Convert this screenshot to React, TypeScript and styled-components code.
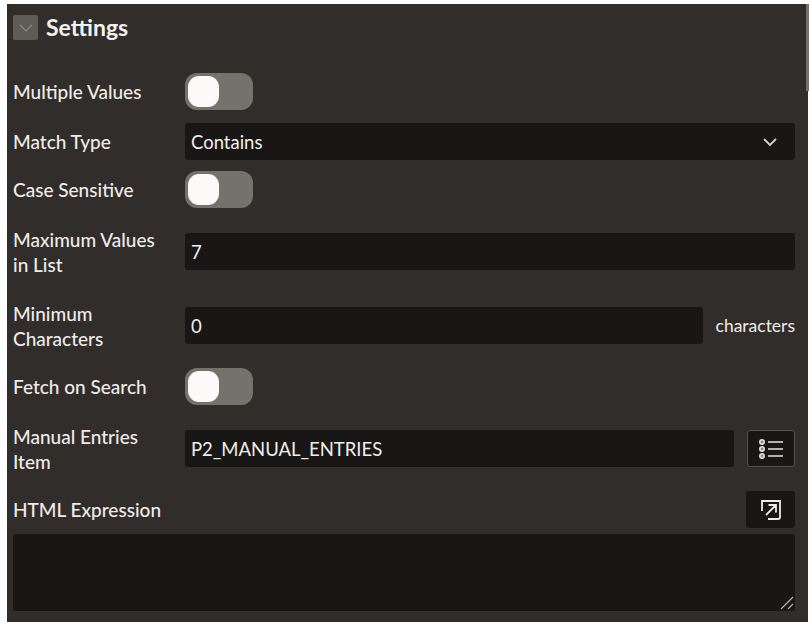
import React from "react";
import styled, { createGlobalStyle } from "styled-components";

const Global = createGlobalStyle`
  html, body { margin: 0; padding: 0; background: #fdfdfd; }
  body { font-family: "Lato", "Open Sans", sans-serif; }
`;

const Page = styled.div`
  width: 810px;
  height: 625px;
  padding: 4px 2px 3px 7px;
  box-sizing: border-box;
  display: flex;
  overflow: hidden;
`;

const Panel = styled.section`
  flex: 1;
  background: #312d2a;
  padding: 11px 13px 0 6px;
  box-sizing: border-box;
  display: flex;
  flex-direction: column;
  color: #f1efed;
`;

const Scrollbar = styled.div`
  position: absolute;
  left: 806px;
  top: 4px;
  width: 3px;
  height: 87px;
  background: #75716e;
`;

const Header = styled.header`
  display: flex;
  align-items: center;
  gap: 8px;
  height: 25px;
  margin-bottom: 33px;
`;

const Collapse = styled.button`
  width: 25px;
  height: 25px;
  padding: 0;
  border: 0;
  border-radius: 2px;
  background: #5f5b57;
  display: flex;
  align-items: center;
  justify-content: center;
`;

const Title = styled.h2`
  margin: 0;
  font-size: 23px;
  font-weight: 700;
  line-height: 25px;
  color: #f4f2f0;
`;

const Row = styled.div<{ $top: number }>`
  display: flex;
  align-items: center;
  margin-top: ${(p) => p.$top}px;
`;

const Label = styled.label<{ $double?: boolean }>`
  width: 172px;
  flex: none;
  font-size: 19px;
  font-weight: 500;
  line-height: 25px;
  color: #eeecea;
  height: ${(p) => (p.$double ? "49px" : "auto")};
`;

const Grow = styled.div`
  flex: 1;
`;

const Field = styled.div`
  flex: 1;
  height: 37px;
  background: #181716;
  border-radius: 3px;
  padding: 0 6px;
  box-sizing: border-box;
  display: flex;
  align-items: center;
  justify-content: space-between;
  font-size: 18.5px;
  color: #f1efed;
`;

const Caret = styled.span`
  display: flex;
  margin-right: 11px;
`;

const Toggle = styled.div`
  width: 68px;
  height: 37px;
  border-radius: 12px;
  background: #75716c;
  padding: 3px;
  box-sizing: border-box;
`;

const Knob = styled.div`
  width: 31px;
  height: 31px;
  border-radius: 11px;
  background: #fbfaf9;
`;

const Suffix = styled.span`
  margin-left: 13px;
  font-size: 17.5px;
  color: #eeecea;
`;

const IconButton = styled.button<{ $outlined?: boolean }>`
  flex: none;
  margin-left: 13px;
  width: ${(p) => (p.$outlined ? 48 : 49)}px;
  height: 37px;
  padding: 0;
  border-radius: 3px;
  background: #181716;
  border: ${(p) => (p.$outlined ? "1.5px solid #55514e" : "0")};
  box-sizing: border-box;
  display: flex;
  align-items: center;
  justify-content: center;
`;

const TextArea = styled.div`
  position: relative;
  height: 77px;
  margin-top: 6px;
  background: #181716;
  border-radius: 3px;
`;

const Grip = styled.svg`
  position: absolute;
  right: 1px;
  bottom: 1px;
`;

const Chevron = ({ color, size, width }: { color: string; size: number; width: number }) => (
  <svg width={size} height={size} viewBox="0 0 16 16" fill="none">
    <path d="M2 5l6 6 6-6" stroke={color} strokeWidth={width} />
  </svg>
);

const Switch = () => (
  <Toggle>
    <Knob />
  </Toggle>
);

const App = () => (
  <Page>
    <Global />
    <Panel>
      <Header>
        <Collapse>
          <Chevron color="#8b8782" size={16} width={1.2} />
        </Collapse>
        <Title>Settings</Title>
      </Header>
      <Row $top={0}>
        <Label>Multiple Values</Label>
        <Switch />
      </Row>
      <Row $top={13}>
        <Label>Match Type</Label>
        <Field>
          Contains
          <Caret>
            <Chevron color="#d5d2cf" size={16} width={1.8} />
          </Caret>
        </Field>
      </Row>
      <Row $top={11}>
        <Label>Case Sensitive</Label>
        <Switch />
      </Row>
      <Row $top={19}>
        <Label $double>
          Maximum Values
          <br />
          in List
        </Label>
        <Field>7</Field>
      </Row>
      <Row $top={25}>
        <Label $double>
          Minimum
          <br />
          Characters
        </Label>
        <Field>0</Field>
        <Suffix>characters</Suffix>
      </Row>
      <Row $top={18}>
        <Label>Fetch on Search</Label>
        <Switch />
      </Row>
      <Row $top={19}>
        <Label $double>
          Manual Entries
          <br />
          Item
        </Label>
        <Field>P2_MANUAL_ENTRIES</Field>
        <IconButton $outlined>
          <svg width="26" height="22" viewBox="0 0 26 22" fill="none" stroke="#e6e3e0" strokeWidth="1.5">
            <circle cx="4" cy="4" r="2.2" fill="#8f8b86" />
            <circle cx="4" cy="11" r="2.2" fill="#8f8b86" />
            <circle cx="4" cy="18" r="2.2" fill="#8f8b86" />
            <path d="M10 4h15M10 11h15M10 18h15" />
          </svg>
        </IconButton>
      </Row>
      <Row $top={18}>
        <Label>HTML Expression</Label>
        <Grow />
        <IconButton>
          <svg width="24" height="24" viewBox="0 0 24 24" fill="none" stroke="#eeecea" strokeWidth="1.8">
            <path d="M3 13V3h18v16a2 2 0 0 1-2 2H9" />
            <path d="M7 17L17 7M9.5 7H17v7.5" />
          </svg>
        </IconButton>
      </Row>
      <TextArea>
        <Grip width="14" height="14" viewBox="0 0 14 14" fill="none" stroke="#b5b2ae" strokeWidth="1.2">
          <path d="M1 13L13 1M8 13l5-5" />
        </Grip>
      </TextArea>
    </Panel>
    <Scrollbar />
  </Page>
);

export default App;
